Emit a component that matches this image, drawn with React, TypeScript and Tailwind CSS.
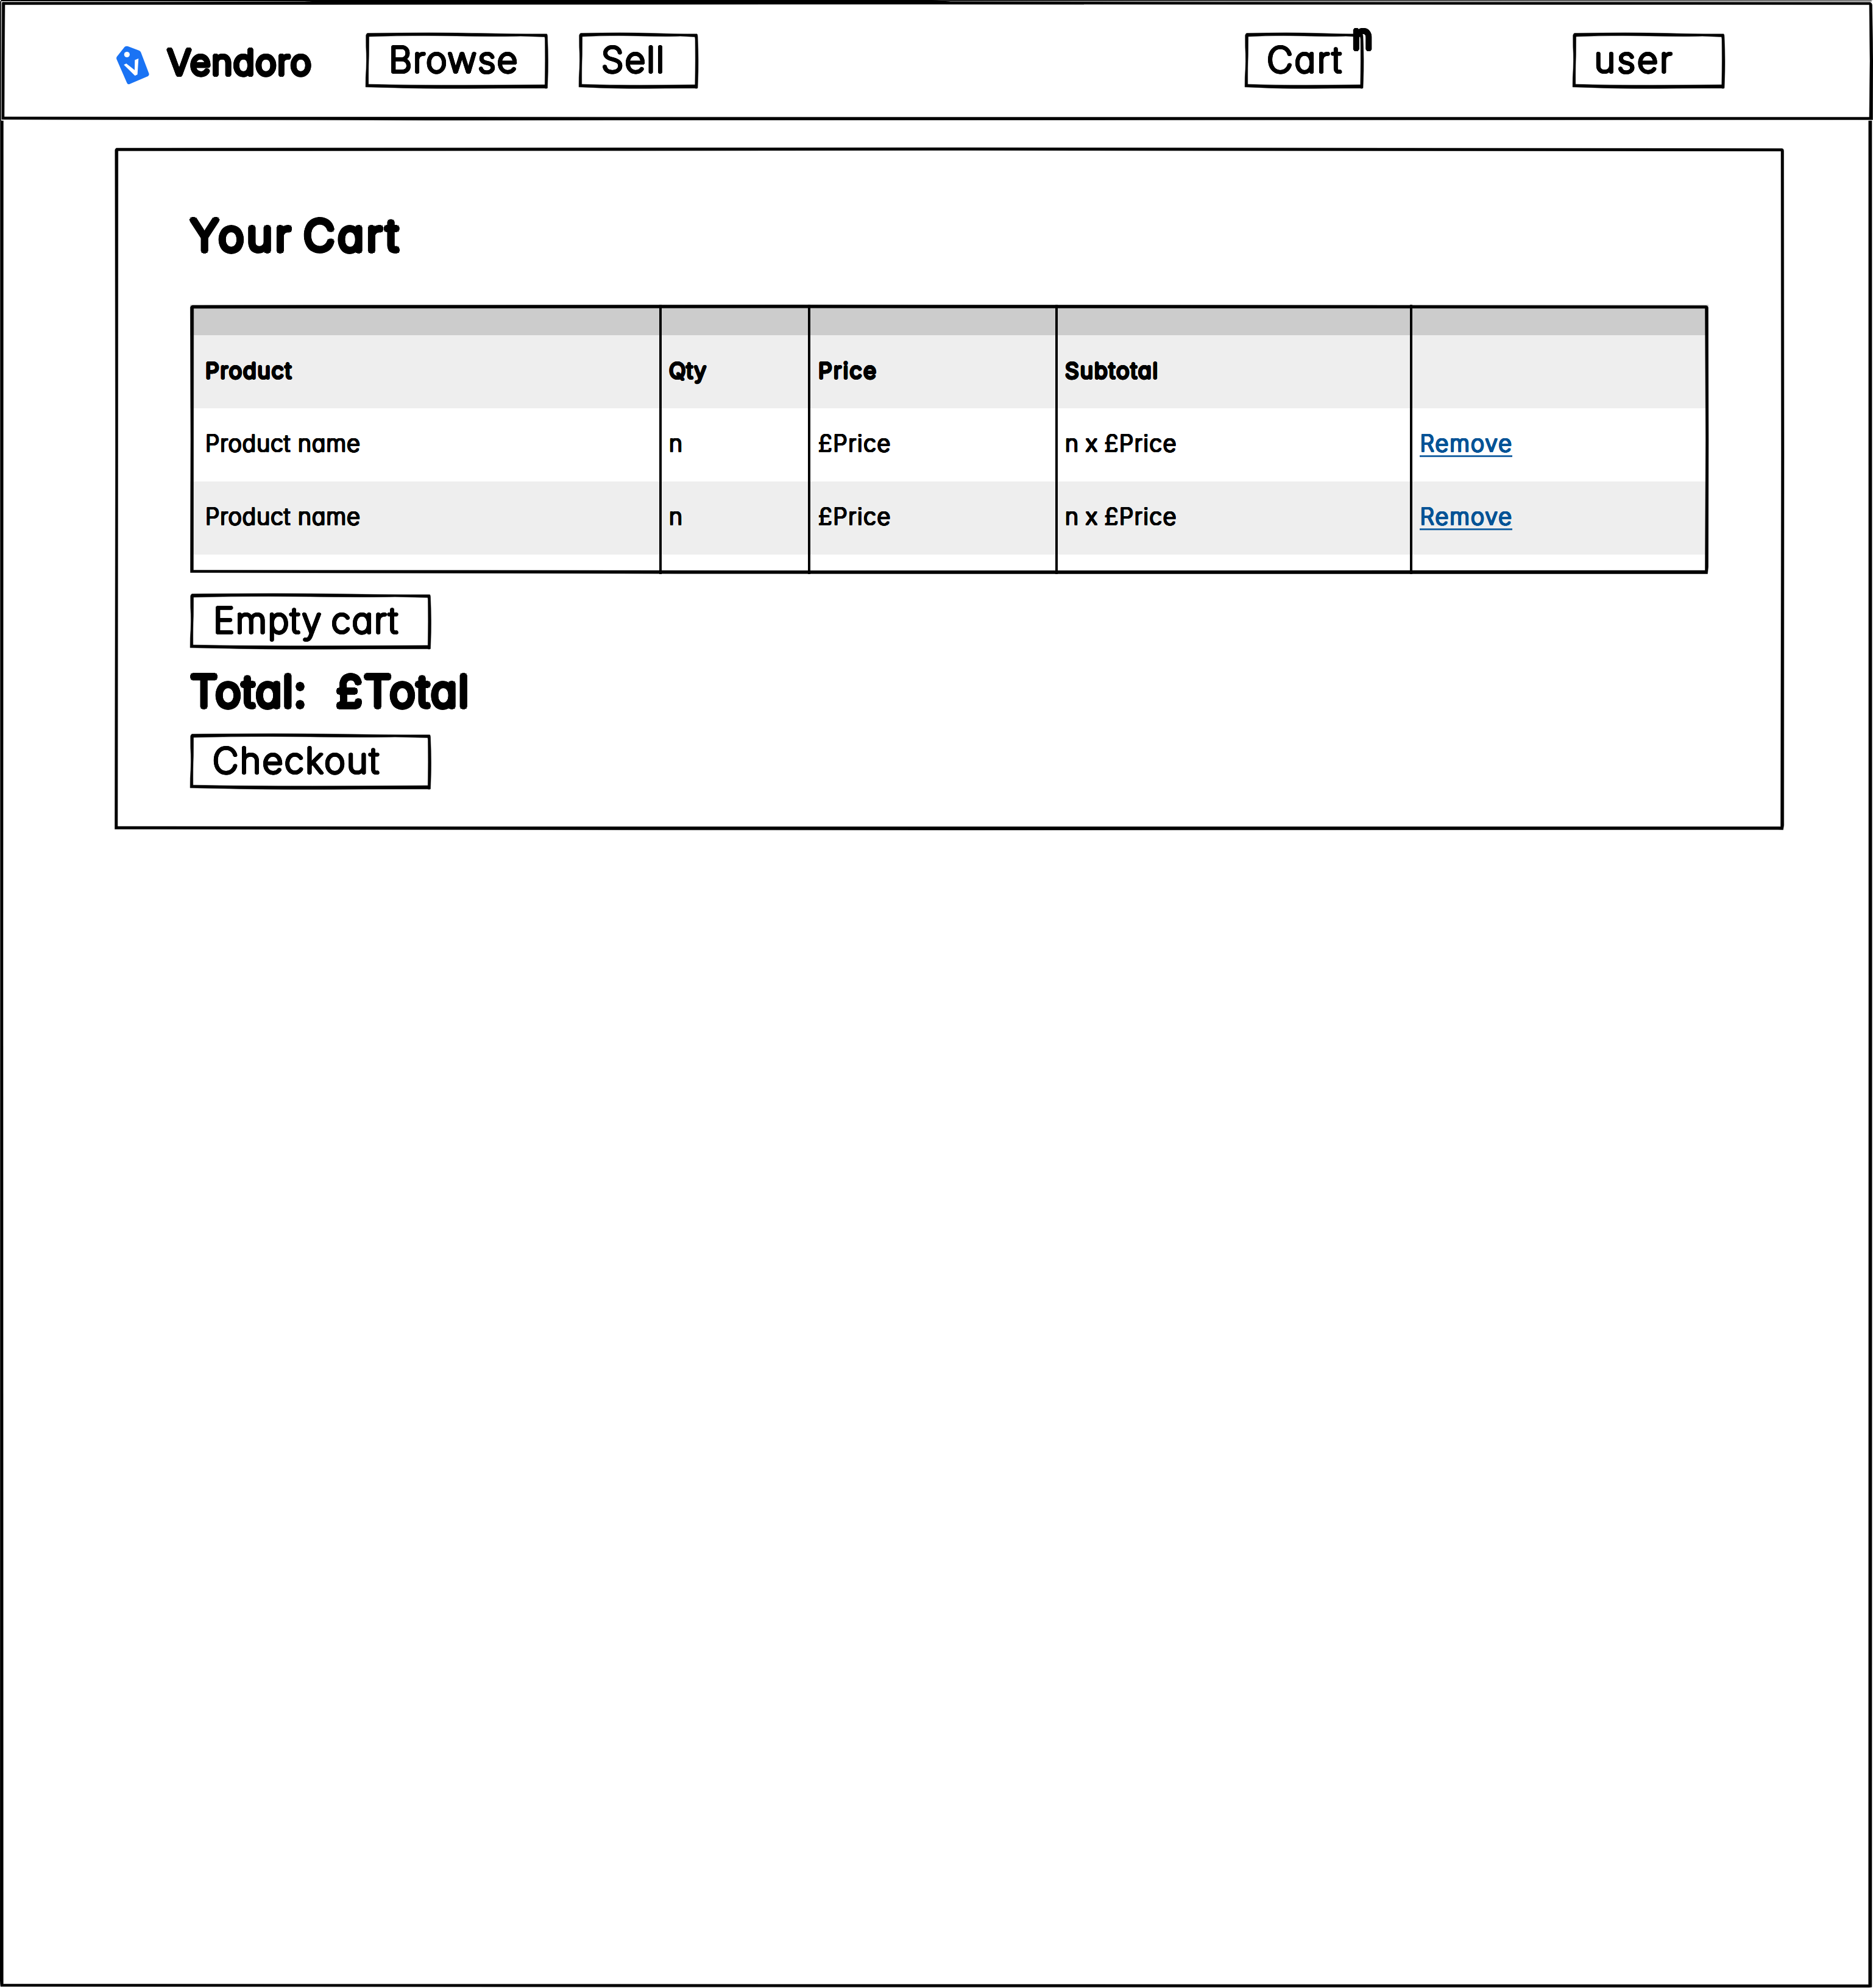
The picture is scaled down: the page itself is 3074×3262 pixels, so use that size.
import React from 'react';

type FrameProps = { w: number; h: number; d: string };

function Frame({ w, h, d }: FrameProps) {
  return (
    <svg className="pointer-events-none absolute left-0 top-0 overflow-visible" width={w} height={h} viewBox={`0 0 ${w} ${h}`} aria-hidden="true">
      <path d={d} fill="black" fillRule="evenodd" stroke="black" strokeWidth="0.5" strokeLinejoin="round" />
    </svg>
  );
}

/* Small hand-drawn box outline: each edge bows slightly and varies in weight. */
function buttonOutline(w: number, h: number) {
  return [
    `M3 0.5 Q${w * 0.4} -0.8 ${w * 0.62} 0.6 T${w - 2} 1.8 Q${w - 1} 3 ${w - 1} 6`,
    `Q${w + 0.8} ${h * 0.5} ${w - 0.6} ${h - 12} L${w - 1} ${h - 0.4} Q${w - 3} ${h + 0.6} ${w - 6} ${h - 0.3}`,
    `Q${w * 0.7} ${h - 0.3} ${w * 0.55} ${h + 0.2} Q${w * 0.3} ${h + 0.4} ${w * 0.12} ${h - 1.3} L0.1 ${h - 2.2}`,
    `L0.3 ${h - 18} Q2.2 ${h * 0.5} 0.8 ${h * 0.25} L0.7 4 Q1.2 1.4 3 0.5 Z`,
    `M5.6 6 Q${w * 0.25} 3.8 ${w * 0.5} 5 T${w * 0.85} 5.2 L${w - 5.5} 6.5`,
    `L${w - 5} 10 Q${w - 4.4} ${h * 0.5} ${w - 5.2} ${h - 6} L${w * 0.7} ${h - 5.4} Q${w * 0.3} ${h - 4.8} 4.8 ${h - 6.8}`,
    `Q4.6 ${h * 0.6} 5.4 ${h * 0.4} Z`,
  ].join(' ');
}

type InkProps = { children: string; className?: string };

/* Marker-style lettering: light strokes thickened evenly so the ends turn round. */
const INK = "block whitespace-pre font-['Inter',sans-serif] [font-feature-settings:'cv11']";
const REGULAR =
  'font-extralight [text-shadow:.036em_0_0,-.036em_0_0,0_.036em_0,0_-.036em_0,.033em_.014em_0,-.033em_.014em_0,.033em_-.014em_0,-.033em_-.014em_0,.025em_.025em_0,-.025em_.025em_0,.025em_-.025em_0,-.025em_-.025em_0,.014em_.033em_0,-.014em_.033em_0,.014em_-.033em_0,-.014em_-.033em_0]';
const BOLD =
  'font-light [text-shadow:.051em_0_0,-.051em_0_0,0_.051em_0,0_-.051em_0,.047em_.02em_0,-.047em_.02em_0,.047em_-.02em_0,-.047em_-.02em_0,.036em_.036em_0,-.036em_.036em_0,.036em_-.036em_0,-.036em_-.036em_0,.02em_.047em_0,-.02em_.047em_0,.02em_-.047em_0,-.02em_-.047em_0]';

function Ink({ children, className = '' }: InkProps) {
  return <span className={`${INK} ${REGULAR} ${className}`}>{children}</span>;
}

function BoldInk({ children, className = '' }: InkProps) {
  return <span className={`${INK} ${BOLD} ${className}`}>{children}</span>;
}

type SketchButtonProps = {
  label: string;
  w: number;
  className?: string;
  text?: string;
  children?: React.ReactNode;
};

function SketchButton({ label, w, className = '', text = '', children }: SketchButtonProps) {
  return (
    <button type="button" className={`relative flex h-[91px] shrink-0 items-center pb-[4px] text-left ${className}`}>
      <Frame w={w} h={91} d={buttonOutline(w, 91)} />
      <Ink className={`text-[58.5px] leading-[60px] ${text}`}>{label}</Ink>
      {children}
    </button>
  );
}

function Logo() {
  return (
    <svg className="mt-[15px] shrink-0" width="56" height="64" viewBox="190 75 56 64">
      <path
        d="M204.5 77 Q207 75 210 76 L228.5 83 Q230.5 84 231.3 86 L244.6 121 Q245.3 123.6 243 125 L212.5 137.9 Q209.6 139 208.3 136 L191.3 97 Q190.5 94.8 191.8 93 Z"
        fill="#1a73f4"
      />
      <circle cx="208.3" cy="89.5" r="4.6" fill="white" />
      <path d="M203.2 106.3 L207.3 104.3 L221 115 L221.3 98.5 L227.3 96 L225.6 122.3 L221.5 124.3 Z" fill="white" />
    </svg>
  );
}

const GRID = 'grid grid-cols-[770px_244px_406px_582px_490px]';
const RULE = 'border-l-4 border-black';
const CELL = `flex items-center pb-[4px] pl-[12px] ${RULE}`;

function BlankRow({ className }: { className: string }) {
  return (
    <div className={`${GRID} ${className}`}>
      <div />
      <div className={RULE} />
      <div className={RULE} />
      <div className={RULE} />
      <div className={RULE} />
    </div>
  );
}

const rows = ['bg-white', 'bg-[#eeeeee]'];

export default function App() {
  return (
    <div className="relative flex h-[3262px] w-[3074px] flex-col overflow-hidden bg-white text-black">
      <Frame
        w={3074}
        h={3262}
        d="M2 0 L3071 0 L3072 3 L3072.3 1600 L3072 3260.5 L3068 3261 L1500 3260.5 L1 3259.5 L0 3250 L0.6 1600 L0.5 3 Z M5.5 6 L5 1600 L5.3 3255.5 L1500 3256 L3066.7 3256.5 L3067 1600 L3066.8 6 Z"
      />
      <header className="relative flex h-[197px] shrink-0 items-start pl-[190px] pt-[54px]">
        <div className="absolute left-[2px] top-[2px] h-[196px] w-[3072px] bg-white" />
        <div className="absolute left-[1530px] top-0 h-px w-[1544px] bg-gradient-to-r from-[#333333] to-[#dddddd]" />
        <Frame
          w={3074}
          h={197}
          d="M4 3.5 L500 2.8 L545 0 L1530 0 L1560 2.8 L2000 3.3 L3069 3.7 Q3072 4 3072.5 8 L3074 100 L3073.5 196.5 L1500 197 L700 197.2 L3 196 L3 100 L3.3 8 Q3 4 4 3.5 Z M8 7.7 L1500 7 L3068 7.7 L3069 100 L3068 192.3 L1500 192.3 L7 191.8 L7.3 100 Z"
        />
        <div className="relative flex h-[91px] w-[410px] shrink-0 items-center">
          <Logo />
          <BoldInk className="pl-[28.5px] pt-[5px] text-[58px] leading-[60px] tracking-[.0257em]">Vendoro</BoldInk>
        </div>
        <SketchButton label="Browse" w={299.5} className="w-[300px] pl-[38.3px]" text="tracking-[.0357em]" />
        <SketchButton label="Sell" w={196} className="ml-[50px] w-[196px] pl-[37px]" text="tracking-[.038em]" />
        <SketchButton label="Cart" w={195} className="ml-[897px] w-[195px] pl-[36.3px]" text="tracking-[.049em]">
          <BoldInk className="absolute left-[176px] top-[-24px] text-[58px] leading-[60px]">n</BoldInk>
        </SketchButton>
        <SketchButton label="user" w={250} className="ml-[343px] w-[250px] pl-[35.6px]" text="tracking-[.058em]" />
      </header>

      <main className="relative ml-[188px] mt-[45px] flex h-[1119px] w-[2740px] flex-col items-start pl-[124px] pt-[108px]">
        <Frame
          w={2740}
          h={1120}
          d="M3 1 L1400 0.3 L2737 1.7 Q2739.5 2 2739.5 6 L2740 500 L2739.7 1112 L2738.5 1119.6 L2730 1119.3 L1400 1120 L900 1119.8 L0.5 1118.5 L1.5 500 L0.8 4 Q1.5 1.5 3 1 Z M5.8 5.6 L1400 4.8 L2735 6 L2735.5 500 L2734.5 1114.5 L900 1114.6 L5 1114 L5.5 500 Z"
        />
        <BoldInk className="text-[71px] leading-[72px] tracking-[.065em] [word-spacing:-.118em]">Your Cart</BoldInk>

        <div className="relative mt-[78px] w-[2492px]">
          <BlankRow className="h-[50px] bg-[#cccccc]" />
          <div className={`${GRID} h-[120px] bg-[#eeeeee] text-[36px] leading-[40px]`}>
            <div className="flex items-center pb-[4px] pl-[25px]">
              <BoldInk className="tracking-[.0524em]">Product</BoldInk>
            </div>
            <div className={CELL}>
              <BoldInk className="tracking-[.0328em]">Qty</BoldInk>
            </div>
            <div className={CELL}>
              <BoldInk className="pl-px tracking-[.067em]">Price</BoldInk>
            </div>
            <div className={CELL}>
              <BoldInk className="tracking-[.056em]">Subtotal</BoldInk>
            </div>
            <div className={RULE} />
          </div>
          {rows.map((tint) => (
            <div key={tint} className={`${GRID} h-[120px] text-[37.5px] leading-[38px] ${tint}`}>
              <div className="flex items-center pb-[4px] pl-[25px]">
                <Ink className="tracking-[.031em]">Product name</Ink>
              </div>
              <div className={CELL}>
                <Ink>n</Ink>
              </div>
              <div className={CELL}>
                <Ink className="pl-px tracking-[.0475em]">£Price</Ink>
              </div>
              <div className={CELL}>
                <Ink className="tracking-[.045em] [word-spacing:-.06em]">n x £Price</Ink>
              </div>
              <div className={`flex items-center pb-[2px] pl-[12px] ${RULE}`}>
                <a className="block w-[152px] border-b-[3px] border-[#1f66a5] text-[#045396]">
                  <Ink className="pl-[.5px] tracking-[.056em]">Remove</Ink>
                </a>
              </div>
            </div>
          ))}
          <BlankRow className="h-[32px]" />
          <Frame
            w={2492}
            h={442}
            d="M4 1 L1000 0.2 L2488 1.5 Q2491 1.5 2491.5 5 L2492 220 L2491.6 430 L2490.5 441.5 L2484 441.5 L1400 441.5 L800 441.3 L0.5 439.5 L1 220 L0.4 4 Q2 1.2 4 1 Z M5.8 6 L1000 5.3 L2486.5 6 L2487.5 220 L2486.5 436 L1000 436.3 L5.4 435.5 L5.6 220 Z"
          />
        </div>

        <SketchButton label="Empty cart" w={395.5} className="mt-[32px] w-[396px] pl-[38.3px]" text="tracking-[.034em] [word-spacing:-.072em]" />
        <div className="mt-[33px] flex h-[72px] text-[71px] leading-[72px]">
          <BoldInk className="w-[239.6px] tracking-[.0251em]">Total:</BoldInk>
          <BoldInk className="tracking-[.0358em]">£Total</BoldInk>
        </div>
        <SketchButton label="Checkout" w={395.5} className="mt-[34px] w-[396px] pl-[36.9px]" text="tracking-[.0435em]" />
      </main>
    </div>
  );
}
